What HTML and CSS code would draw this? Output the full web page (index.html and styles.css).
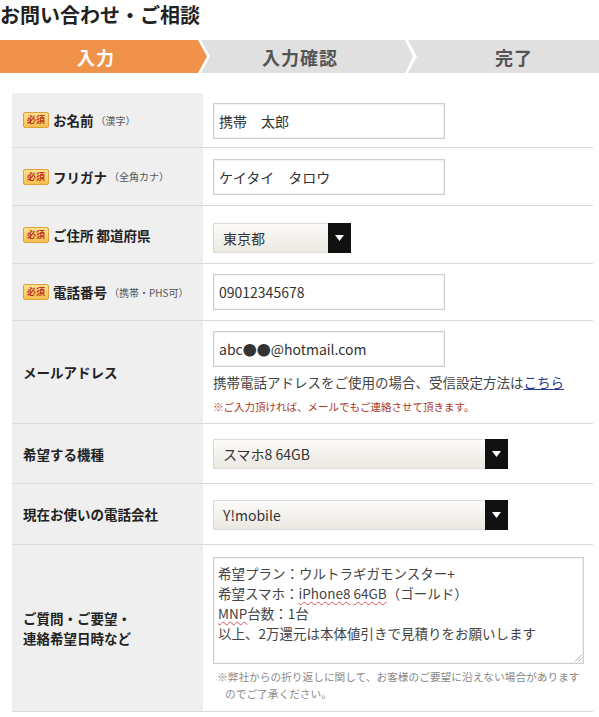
FILE: index.html
```
<!DOCTYPE html>
<html lang="ja">
<head>
<meta charset="utf-8">
<title>お問い合わせ・ご相談</title>
<link rel="stylesheet" href="styles.css">
</head>
<body>
<h1 class="title">お問い合わせ・ご相談</h1>
<ol class="steps">
  <li class="step step-current">入力</li>
  <li class="step step-mid">入力確認</li>
  <li class="step step-last">完了</li>
</ol>
<div class="form">
  <div class="row">
    <div class="label"><span class="req">必須</span><span>お名前</span><span class="sub">（漢字）</span></div>
    <div class="field f-name"><input class="text" type="text" value="携帯　太郎"></div>
  </div>
  <div class="row">
    <div class="label"><span class="req">必須</span><span>フリガナ</span><span class="sub">（全角カナ）</span></div>
    <div class="field f-kana"><input class="text" type="text" value="ケイタイ　タロウ"></div>
  </div>
  <div class="row">
    <div class="label"><span class="req">必須</span><span>ご住所 都道府県</span></div>
    <div class="field f-pref">
      <div class="select select-short"><span class="select-value">東京都</span><span class="select-arrow"><svg width="9" height="6" viewBox="0 0 9 6"><path d="M0 0h9L4.5 6z" fill="#fff"/></svg></span></div>
    </div>
  </div>
  <div class="row">
    <div class="label"><span class="req">必須</span><span>電話番号</span><span class="sub">（携帯・PHS可）</span></div>
    <div class="field f-tel"><input class="text" type="text" value="09012345678"></div>
  </div>
  <div class="row">
    <div class="label"><span>メールアドレス</span></div>
    <div class="field f-mail">
      <input class="text" type="text" value="abc●●@hotmail.com">
      <p class="help">携帯電話アドレスをご使用の場合、受信設定方法は<a href="#">こちら</a></p>
      <p class="notice">※ご入力頂ければ、メールでもご連絡させて頂きます。</p>
    </div>
  </div>
  <div class="row">
    <div class="label"><span>希望する機種</span></div>
    <div class="field f-model">
      <div class="select select-wide"><span class="select-value">スマホ8 64GB</span><span class="select-arrow"><svg width="9" height="6" viewBox="0 0 9 6"><path d="M0 0h9L4.5 6z" fill="#fff"/></svg></span></div>
    </div>
  </div>
  <div class="row">
    <div class="label"><span>現在お使いの電話会社</span></div>
    <div class="field f-carrier">
      <div class="select select-wide"><span class="select-value">Y!mobile</span><span class="select-arrow"><svg width="9" height="6" viewBox="0 0 9 6"><path d="M0 0h9L4.5 6z" fill="#fff"/></svg></span></div>
    </div>
  </div>
  <div class="row">
    <div class="label label-multi"><span>ご質問・ご要望・<br>連絡希望日時など</span></div>
    <div class="field f-msg">
      <div class="textarea">希望プラン：ウルトラギガモンスター+<br>希望スマホ：<span class="spell">iPhone8</span> <span class="spell">64GB</span>（ゴールド）<br><span class="spell">MNP</span>台数：1台<br>以上、2万還元は本体値引きで見積りをお願いします<svg class="grip" width="8" height="8" viewBox="0 0 8 8"><path d="M7.5 1L1 7.5M7.5 4.5L4.5 7.5" stroke="#aaa" stroke-width="1"/></svg></div>
      <p class="note">※弊社からの折り返しに関して、お客様のご要望に沿えない場合があります<br>のでご了承ください。</p>
    </div>
  </div>
</div>
</body>
</html>
```
FILE: styles.css
```
* { box-sizing: border-box; }
body {
  margin: 0;
  background: #fff;
  color: #333;
  font-family: "Noto Sans CJK JP", "Noto Sans", sans-serif;
}
.title {
  margin: 0 0 10px;
  height: 30px;
  font-size: 20px;
  line-height: 30px;
  font-weight: 700;
  color: #222;
}
.steps {
  list-style: none;
  margin: 0;
  padding: 0;
  display: flex;
  height: 33px;
}
.step {
  height: 33px;
  display: flex;
  align-items: center;
  justify-content: center;
  font-size: 18px;
  font-weight: 700;
  letter-spacing: 1px;
  background: #e0e0e0;
  color: #555;
}
.step-current {
  width: 207px;
  background: #f0924a;
  color: #fff;
  padding-right: 15px;
  clip-path: polygon(0 0, 198px 0, 100% 50%, 198px 100%, 0 100%);
}
.step-mid {
  width: 212px;
  margin-left: -6px;
  padding-right: 14px;
  clip-path: polygon(0 0, 204px 0, 100% 50%, 204px 100%, 0 100%, 9px 50%);
}
.step-last {
  flex: 1;
  margin-left: -5px;
  padding-left: 21px;
  clip-path: polygon(0 0, 100% 0, 100% 100%, 0 100%, 9px 50%);
}
.form {
  margin: 20px 0 0 12px;
  width: 581px;
}
.row {
  display: grid;
  grid-template-columns: 191px 1fr;
  border-bottom: 1px solid #dadada;
}
.label {
  background: #efefef;
  display: flex;
  align-items: center;
  padding-left: 11px;
  font-size: 13.5px;
  font-weight: 700;
  color: #222;
  white-space: nowrap;
}
.label-multi { line-height: 20px; }
.req {
  display: inline-block;
  width: 26px;
  height: 16px;
  margin-right: 4px;
  border: 1px solid #e0a040;
  border-radius: 2px;
  background: linear-gradient(#fde28e, #f5c150);
  color: #c2331c;
  font-size: 9px;
  font-weight: 700;
  line-height: 14px;
  text-align: center;
}
.sub {
  margin-left: 2px;
  font-size: 10px;
  font-weight: 400;
  color: #555;
}
.field { padding-left: 10px; }
.f-name { padding-top: 10px; padding-bottom: 8px; }
.f-kana { padding-top: 11px; padding-bottom: 10px; }
.f-pref { padding-top: 17px; padding-bottom: 10px; }
.f-tel { padding-top: 10px; padding-bottom: 10px; }
.f-mail { padding-top: 10px; padding-bottom: 6px; }
.f-model { padding-top: 15px; padding-bottom: 14px; }
.f-carrier { padding-top: 16px; padding-bottom: 14px; }
.f-msg { padding-top: 12px; padding-bottom: 9px; }
.text {
  display: block;
  width: 232px;
  height: 36px;
  margin: 0;
  padding: 0 5px;
  border: 1px solid #cfcfcf;
  box-shadow: inset 0 0 0 1px #f1f1f1;
  background: #fff;
  font-family: inherit;
  font-size: 14px;
  color: #333;
  outline: none;
}
.select {
  display: flex;
  height: 30px;
  border: 1px solid #dcdcdc;
  background: linear-gradient(#fcfbf9, #ebe8e1);
}
.select-short { width: 138px; }
.select-wide { width: 295px; }
.select-value {
  flex: 1;
  padding-left: 9px;
  font-size: 14px;
  line-height: 28px;
  color: #333;
}
.select-arrow {
  width: 23px;
  margin: -1px -1px -1px 0;
  background: #111;
  display: flex;
  align-items: center;
  justify-content: center;
}
.help {
  margin: 5px 0 0;
  font-size: 13.5px;
  line-height: 20px;
  color: #444;
  white-space: nowrap;
}
.help a {
  color: #2b3a8f;
  text-decoration: underline;
}
.notice {
  margin: 5px 0 0;
  font-size: 10.5px;
  line-height: 20px;
  color: #a8382c;
}
.textarea {
  position: relative;
  width: 371px;
  height: 107px;
  padding: 5px 4px;
  border: 1px solid #cfcfcf;
  box-shadow: inset 0 0 0 1px #f1f1f1;
  font-size: 13.5px;
  line-height: 20px;
  color: #444;
  white-space: nowrap;
}
.spell {
  text-decoration: underline wavy #d9534f;
  text-decoration-thickness: 1px;
  text-underline-offset: 2px;
}
.grip {
  position: absolute;
  right: 1px;
  bottom: 1px;
}
.note {
  margin: 4px 0 0;
  padding-left: 12px;
  text-indent: -8px;
  font-size: 10.7px;
  line-height: 17px;
  color: #888;
  white-space: nowrap;
}
```
